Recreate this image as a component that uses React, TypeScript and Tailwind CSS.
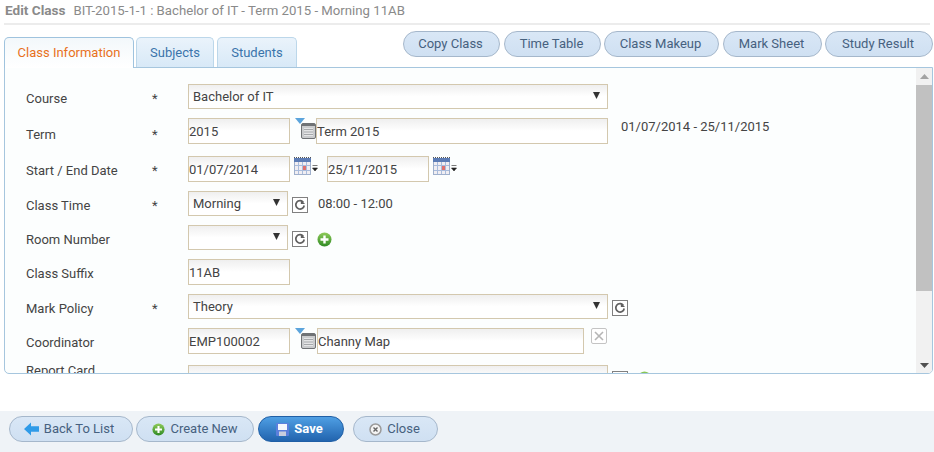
import React from 'react';

const fieldCls = "h-full border border-[#d3c8ae] bg-gradient-to-b from-[#efefef] to-white to-50% text-[13px] text-[#444] outline-none";

const Field = ({value, width}: {value: string; width: string}) => (
    <input readOnly value={value} className={`${fieldCls} ${width}`}/>
);

const Select = ({value, width}: {value: string; width: string}) => (
    <div className={`${fieldCls} ${width} flex items-center justify-between pl-1 pr-[7px]`}>
        <span>{value}</span>
        <svg width="7" height="7" viewBox="0 0 7 7" className="mb-[3px]"><path d="M0 0h7L3.500 7z" fill="#333"/></svg>
    </div>
);

const Lookup = () => (
    <svg width="21" height="26" viewBox="0 0 21 26" className="shrink-0">
        <path d="M0 0h10L5 6z" fill="#5ba4dc"/>
        <rect x="6.500" y="5.500" width="14" height="15" rx="1.500" fill="#c9cbcd" stroke="#6f7275"/>
        <rect x="7" y="6" width="13" height="2" fill="#6f7275"/>
        <rect x="9" y="10" width="9" height="8" fill="#e4e5e6"/>
        <path d="M9 11.500h9M9 14h9M9 16.500h9" stroke="#a5a8ab"/>
    </svg>
);

const Calendar = () => (
    <svg width="24" height="20" viewBox="0 0 24 20" className="shrink-0">
        <rect x="0.500" y="1.500" width="16" height="16" fill="#f0eef2" stroke="#9fb0cc"/>
        <rect x="0" y="1" width="17" height="4" fill="#5c7cb5"/>
        <path d="M0 0.500h17" stroke="#555" strokeDasharray="1 1"/>
        <path d="M4.500 5v12M8.500 5v12M12.500 5v12M1 8.500h15M1 13.500h15" stroke="#a9bcdc"/>
        <rect x="9" y="9" width="3" height="4" fill="#e0716d"/>
        <path d="M18.500 8.500h5M18.500 11h5l-2.500 3z" fill="#222" stroke="#222" strokeWidth="0.600"/>
    </svg>
);

const Refresh = () => (
    <span className="flex h-[16px] w-[16px] shrink-0 items-center justify-center border border-[#808080] bg-white">
        <svg width="12" height="12" viewBox="0 0 12 12" fill="none">
            <path d="M9.300 3.200A4.200 4.200 0 1 0 10.200 6.500" stroke="#606060" strokeWidth="1.700"/>
            <path d="M6.800 0.500v4.500h4.200z" fill="#606060"/>
        </svg>
    </span>
);

const PlusCircle = ({size = 15}: {size?: number}) => (
    <svg width={size} height={size} viewBox="0 0 15 15" className="shrink-0">
        <defs>
            <linearGradient id="plusFill" x1="0" y1="0" x2="0" y2="1">
                <stop offset="0" stopColor="#8fcb5a"/>
                <stop offset="1" stopColor="#2f8a24"/>
            </linearGradient>
        </defs>
        <circle cx="7.500" cy="7.500" r="7" fill="url(#plusFill)"/>
        <path d="M7.500 3.500v8M3.500 7.500h8" stroke="#fff" strokeWidth="2.400"/>
    </svg>
);

const FormRow = ({label, required, height, labelTop = "pt-[6px]", children}: {label: string; required?: boolean; height: string; labelTop?: string; children?: React.ReactNode}) => (
    <div className={`flex shrink-0 items-start ${height}`}>
        <div className={`w-[126px] shrink-0 text-[13px] leading-[18px] text-[#444] ${labelTop}`}>{label}</div>
        <div className={`w-[36px] shrink-0 text-[13px] leading-[18px] text-[#444] ${labelTop}`}>{required ? '*' : ''}</div>
        {children}
    </div>
);

const PillButton = ({label, width}: {label: string; width: string}) => (
    <button className={`h-[26px] ${width} rounded-[13px] border border-[#a5b7cb] bg-gradient-to-b from-[#d9e7f6] to-[#cfe0f2] pr-[2px] text-[13px] text-[#46617f]`}>
        {label}
    </button>
);

const App = () => {
    return (
        <div className="flex h-[452px] w-[934px] flex-col overflow-hidden bg-white font-['Roboto',sans-serif]">
            <div className="mx-[4px] flex h-[25px] shrink-0 items-center gap-[8px] border-b-2 border-[#ececec] pb-[2px] pl-px text-[#8a8a8a]">
                <b className="text-[13.6px] font-bold">Edit Class</b>
                <span className="text-[13.2px]">BIT-2015-1-1 : Bachelor of IT - Term 2015 - Morning 11AB</span>
            </div>

            <div className="relative z-10 flex h-[42px] shrink-0 items-end justify-between pl-[4px] pr-px">
                <div className="flex items-end">
                    <div className="-mb-px flex h-[31px] w-[130px] items-center justify-center rounded-t-[5px] border border-b-0 border-[#9fc3de] bg-gradient-to-b from-[#f3f8fb] to-white text-[13px] text-[#e8711c]">
                        Class Information
                    </div>
                    <div className="ml-[2px] flex h-[30px] w-[78px] items-center justify-center rounded-t-[5px] border border-[#bcd7ea] border-b-0 bg-gradient-to-b from-[#eaf3fb] to-[#d8e9f7] text-[13px] text-[#3a74ab]">
                        Subjects
                    </div>
                    <div className="ml-[3px] flex h-[30px] w-[80px] items-center justify-center rounded-t-[5px] border border-[#bcd7ea] border-b-0 bg-gradient-to-b from-[#eaf3fb] to-[#d8e9f7] text-[13px] text-[#3a74ab]">
                        Students
                    </div>
                </div>
                <div className="mb-[10px] flex gap-[3px]">
                    <PillButton label="Copy Class" width="w-[97px] mr-px"/>
                    <PillButton label="Time Table" width="w-[97px]"/>
                    <PillButton label="Class Makeup" width="w-[115px] mr-px"/>
                    <PillButton label="Mark Sheet" width="w-[99px]"/>
                    <PillButton label="Study Result" width="w-[108px]"/>
                </div>
            </div>

            <div className="mx-[4px] mr-px flex h-[307px] shrink-0 overflow-hidden rounded-b-[5px] border border-[#a6c6de] bg-[#fcfefe]">
                <div className="flex min-w-0 flex-1 flex-col overflow-hidden pl-[21px] pt-[16px]">
                    <FormRow label="Course" required height="h-[34px]">
                        <div className="h-[25px]"><Select value="Bachelor of IT" width="w-[420px]"/></div>
                    </FormRow>
                    <FormRow label="Term" required height="h-[38px]" labelTop="pt-[8px]">
                        <div className="flex h-[26px] items-start">
                            <Field value="2015" width="w-[102px]"/>
                            <span className="ml-[5px]"><Lookup/></span>
                            <span className="h-full"><Field value="Term 2015" width="w-[292px]"/></span>
                            <span className="ml-[13px] -mt-px text-[13px] text-[#444]">01/07/2014 - 25/11/2015</span>
                        </div>
                    </FormRow>
                    <FormRow label="Start / End Date" required height="h-[35px]">
                        <div className="flex h-[26px] items-start">
                            <Field value="01/07/2014" width="w-[102px]"/>
                            <span className="ml-[4px] mt-px"><Calendar/></span>
                            <span className="ml-[9px] h-full"><Field value="25/11/2015" width="w-[102px]"/></span>
                            <span className="ml-[4px] mt-px"><Calendar/></span>
                        </div>
                    </FormRow>
                    <FormRow label="Class Time" required height="h-[34px]">
                        <div className="flex h-[25px] items-center">
                            <Select value="Morning" width="w-[100px]"/>
                            <span className="ml-[4px] mt-[3px]"><Refresh/></span>
                            <span className="ml-[10px] text-[13px] text-[#444]">08:00 - 12:00</span>
                        </div>
                    </FormRow>
                    <FormRow label="Room Number" height="h-[34px]">
                        <div className="flex h-[25px] items-center">
                            <Select value="" width="w-[100px]"/>
                            <span className="ml-[4px] mt-[3px]"><Refresh/></span>
                            <span className="ml-[9px] mt-[3px]"><PlusCircle/></span>
                        </div>
                    </FormRow>
                    <FormRow label="Class Suffix" height="h-[35px]">
                        <div className="h-[26px]"><Field value="11AB" width="w-[102px]"/></div>
                    </FormRow>
                    <FormRow label="Mark Policy" required height="h-[34px]">
                        <div className="flex h-[25px] items-center">
                            <Select value="Theory" width="w-[420px]"/>
                            <span className="ml-[4px] mt-[2px]"><Refresh/></span>
                        </div>
                    </FormRow>
                    <FormRow label="Coordinator" height="h-[37px]">
                        <div className="flex h-[26px] items-start">
                            <Field value="EMP100002" width="w-[102px]"/>
                            <span className="ml-[5px]"><Lookup/></span>
                            <span className="ml-px h-full"><Field value="Channy Map" width="w-[267px]"/></span>
                            <span className="ml-[7px] flex h-[16px] w-[16px] items-center justify-center rounded-[2px] border border-[#c4c4c4] bg-white">
                                <svg width="10" height="10" viewBox="0 0 10 10"><path d="M1 1l8 8M9 1l-8 8" stroke="#b5b5b5" strokeWidth="1.600"/></svg>
                            </span>
                        </div>
                    </FormRow>
                    <FormRow label="Report Card" height="h-[34px]" labelTop="-mt-[3px]">
                        <div className="flex h-[25px] items-start">
                            <div className={`${fieldCls} w-[420px]`}/>
                            <span className="ml-[4px] mt-[6px]"><Refresh/></span>
                            <span className="ml-[9px] mt-[6px]"><PlusCircle/></span>
                        </div>
                    </FormRow>
                </div>
                <div className="flex w-[16px] shrink-0 flex-col items-center bg-[#f1f1f1]">
                    <svg width="9" height="5" viewBox="0 0 9 5" className="mb-[6px] mt-[6px] shrink-0"><path d="M0 5h9L4.500 0z" fill="#a3a3a3"/></svg>
                    <div className="h-[206px] w-full shrink-0 bg-[#c1c1c1]"/>
                    <svg width="9" height="5" viewBox="0 0 9 5" className="mt-auto mb-[5px] shrink-0"><path d="M0 0h9L4.500 5z" fill="#505050"/></svg>
                </div>
            </div>

            <div className="mt-[37px] flex h-[41px] shrink-0 items-start gap-[3px] bg-[#eff3f7] pl-[9px] pt-[5px]">
                <button className="flex h-[26px] w-[124px] items-center justify-center gap-[5px] rounded-[13px] border border-[#a5b7cb] bg-gradient-to-b from-[#d9e7f6] to-[#cfe0f2] pr-[4px] text-[13px] text-[#46617f]">
                    <svg width="15" height="14" viewBox="0 0 15 14"><path d="M0 7l7-6.500v3.700h8v5.600H7v3.700z" fill="#2f9be8"/></svg>
                    Back To List
                </button>
                <button className="flex h-[26px] w-[118px] items-center justify-center gap-[5px] rounded-[13px] border border-[#a5b7cb] bg-gradient-to-b from-[#d9e7f6] to-[#cfe0f2] text-[13px] text-[#46617f]">
                    <PlusCircle size={13}/>
                    Create New
                </button>
                <button className="ml-px flex h-[26px] w-[86px] items-center justify-center gap-[5px] rounded-[13px] border border-[#1f5fa6] bg-gradient-to-b from-[#4f9fe4] to-[#2264ae] pr-[3px] text-[13px] font-bold text-white">
                    <svg width="13" height="13" viewBox="0 0 13 13">
                        <rect width="13" height="13" rx="1" fill="#5b7fdc"/>
                        <rect x="2" y="1" width="9" height="6" fill="#f4f6fc"/>
                        <rect x="3" y="8.500" width="7" height="4.500" fill="#c9cede"/>
                    </svg>
                    Save
                </button>
                <button className="ml-[6px] flex h-[26px] w-[85px] items-center justify-center gap-[5px] rounded-[13px] border border-[#a5b7cb] bg-gradient-to-b from-[#d9e7f6] to-[#cfe0f2] pr-[2px] text-[13px] text-[#46617f]">
                    <svg width="13" height="13" viewBox="0 0 13 13">
                        <circle cx="6.500" cy="6.500" r="5.500" fill="#f4f4f4" stroke="#9a9a9a" strokeWidth="1.500"/>
                        <path d="M4.500 4.500l4 4M8.500 4.500l-4 4" stroke="#666" strokeWidth="1.400"/>
                    </svg>
                    Close
                </button>
            </div>
        </div>
    );
};

export default App;
